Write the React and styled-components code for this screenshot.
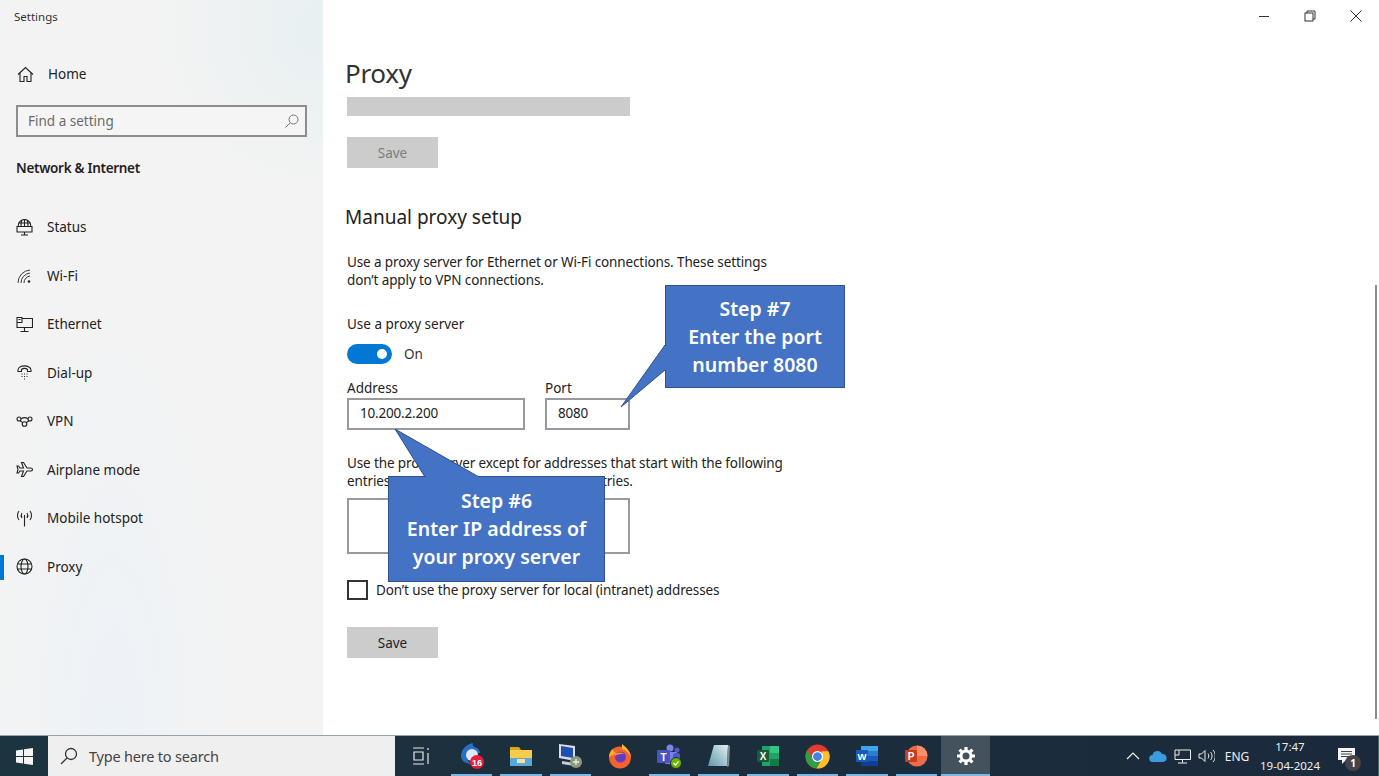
import React from 'react'
import styled, { createGlobalStyle } from 'styled-components'

const Global = createGlobalStyle`
  html, body { margin: 0; padding: 0; background: #fff; overflow: hidden; }
  body { font-family: "Noto Sans", "Open Sans", "Liberation Sans", sans-serif; color: #1a1a1a; }
  * { box-sizing: border-box; }
`
const Screen = styled.div`
  width: 1379px;
  height: 776px;
  display: flex;
  flex-direction: column;
  overflow: hidden;
`
const Win = styled.div`
  flex: 1;
  display: flex;
  min-height: 0;
`
const Sidebar = styled.aside`
  width: 323px;
  flex: none;
  background:
    radial-gradient(circle at 100% 4%, #e8f0f2 0, rgba(232,240,242,0) 22%),
    radial-gradient(ellipse at 35% 100%, #edf2f7 0, rgba(237,242,247,0) 42%),
    #f3f3f3;
`
const AppTitle = styled.div`
  font-size: 11.5px;
  line-height: 16px;
  padding: 9px 0 0 14px;
  height: 58px;
  color: #333;
`
const HomeRow = styled.div`
  display: flex;
  align-items: center;
  height: 32px;
  padding-left: 17px;
  gap: 14px;
  font-size: 13.5px;
  color: #222;
`
const SearchBox = styled.div`
  margin: 15px 16px 0;
  height: 32px;
  width: 291px;
  border: 2px solid #8d8d8d;
  background: #f5f5f5;
  display: flex;
  align-items: center;
  justify-content: space-between;
  padding: 0 5px 0 10px;
  font-size: 13.5px;
  color: #6b6b6b;
`
const GroupTitle = styled.div`
  font-size: 13.5px;
  font-weight: 600;
  line-height: 20px;
  padding: 21px 0 0 16px;
  height: 66px;
  color: #1f1f1f;
  letter-spacing: -0.3px;
`
const Nav = styled.nav`
  display: flex;
  flex-direction: column;
`
const NavRow = styled.div`
  height: 48.5px;
  display: flex;
  align-items: center;
  gap: 14px;
  padding-left: 16px;
  font-size: 13.5px;
  color: #222;
  position: relative;
  &::before {
    content: '';
    display: ${p => (p.$active ? 'block' : 'none')};
    position: absolute;
    left: 0;
    top: 12px;
    width: 4px;
    height: 25px;
    background: #0078d4;
  }
`
const IconBox = styled.span`
  width: 17px;
  height: 17px;
  display: flex;
  flex: none;
`
const Main = styled.main`
  flex: 1;
  position: relative;
  background: #fff;
  min-width: 0;
`
const WindowControls = styled.div`
  height: 32px;
  display: flex;
  justify-content: flex-end;
  align-items: flex-start;
`
const WinBtn = styled.div`
  width: 46px;
  height: 32px;
  display: flex;
  align-items: center;
  justify-content: center;
`
const Content = styled.div`
  padding: 21px 0 0 24px;
`
const PageTitle = styled.h1`
  margin: 0 0 4px -2px;
  font-size: 26px;
  font-weight: 400;
  line-height: 40px;
  color: #333;
  letter-spacing: -0.3px;
`
const HiddenField = styled.div`
  width: 283px;
  height: 19px;
  background: #ccc;
  margin-bottom: 21px;
`
const SaveButton = styled.div`
  width: 91px;
  height: 31px;
  background: #ccc;
  display: flex;
  align-items: center;
  justify-content: center;
  font-size: 13.5px;
  color: ${p => (p.$off ? '#7c7c7c' : '#222')};
  margin-top: ${p => p.$top || 0}px;
`
const SectionTitle = styled.h2`
  margin: 35px 0 22px -2px;
  font-size: 19px;
  font-weight: 400;
  line-height: 28px;
  color: #222;
`
const Para = styled.p`
  margin: ${p => p.$top || 0}px 0 0;
  width: 470px;
  font-size: 13.5px;
  line-height: 18px;
  color: #222;
  letter-spacing: -0.12px;
`
const Label = styled.div`
  font-size: 13.5px;
  line-height: ${p => p.$line || 20}px;
  color: #222;
  margin-top: ${p => p.$top || 0}px;
`
const ToggleRow = styled.div`
  display: flex;
  align-items: center;
  gap: 12px;
  height: 20px;
  margin-top: 10px;
  font-size: 13.5px;
  color: #333;
`
const Toggle = styled.div`
  width: 45px;
  height: 20px;
  border-radius: 10px;
  background: #0078d4;
  display: flex;
  align-items: center;
  justify-content: flex-end;
  padding-right: 5px;
  &::after {
    content: '';
    width: 10px;
    height: 10px;
    border-radius: 50%;
    background: #fff;
  }
`
const Fields = styled.div`
  display: flex;
  gap: 20px;
  margin-top: 15px;
`
const Field = styled.div`
  display: flex;
  flex-direction: column;
`
const Input = styled.div`
  width: ${p => p.$w}px;
  height: ${p => p.$h || 32}px;
  margin-top: ${p => p.$top || 0}px;
  border: 2px solid #9a9a9a;
  background: #fff;
  font-size: 13.5px;
  line-height: 26px;
  padding-left: 11px;
  color: #222;
  letter-spacing: -0.2px;
`
const CheckRow = styled.div`
  display: flex;
  align-items: center;
  gap: 8px;
  margin-top: 26px;
  font-size: 13.5px;
  color: #222;
  letter-spacing: -0.12px;
`
const CheckBox = styled.div`
  width: 21px;
  height: 20px;
  border: 2px solid #333;
`
const Scrollbar = styled.div`
  position: absolute;
  right: 2px;
  top: 285px;
  width: 2px;
  height: 434px;
  background: #8c8c8c;
`
const Callout = styled.div`
  position: absolute;
  left: ${p => p.$x}px;
  top: ${p => p.$y}px;
  width: ${p => p.$w}px;
  height: ${p => p.$h}px;
  background: #4472c4;
  border: 1px solid #2f528f;
  display: flex;
  flex-direction: column;
  align-items: center;
  justify-content: center;
  color: #fff;
  font-size: 19.5px;
  font-weight: 600;
  line-height: 28px;
  text-align: center;
`
const Tail = styled.svg`
  position: absolute;
  left: 0;
  top: 0;
  overflow: visible;
  pointer-events: none;
`
const Taskbar = styled.footer`
  height: 41px;
  flex: none;
  display: flex;
  align-items: stretch;
  background: linear-gradient(90deg, #1c3440 0, #1c2e3c 45%, #1a2a3c 100%);
  border-top: 1px solid #9aa3aa;
  color: #f0f0f0;
`
const StartBtn = styled.div`
  width: 48px;
  display: flex;
  align-items: center;
  justify-content: center;
`
const TaskSearch = styled.div`
  width: 347px;
  background: #efefef;
  display: flex;
  align-items: center;
  gap: 11px;
  padding-left: 12px;
  font-size: 14.5px;
  letter-spacing: -0.2px;
  color: #444;
`
const TaskView = styled.div`
  width: 52px;
  display: flex;
  align-items: center;
  justify-content: center;
`
const Apps = styled.div`
  display: flex;
`
const AppBtn = styled.div`
  width: 49.4px;
  display: flex;
  align-items: center;
  justify-content: center;
  position: relative;
  background: ${p => (p.$active ? '#44525e' : 'transparent')};
  &::after {
    content: '';
    display: ${p => (p.$running ? 'block' : 'none')};
    position: absolute;
    bottom: 0;
    left: ${p => (p.$active ? 0 : 4)}px;
    right: ${p => (p.$active ? 0 : 4)}px;
    height: 2px;
    background: #7cb6e4;
  }
`
const Tray = styled.div`
  margin-left: auto;
  display: flex;
  align-items: center;
  position: relative;
  padding-right: 11px;
  border-right: 1px solid #50606c;
`
const TrayIcon = styled.div`
  width: 24.5px;
  display: flex;
  justify-content: center;
`
const Lang = styled.div`
  width: 36px;
  text-align: center;
  font-size: 12px;
  color: #eee;
`
const Clock = styled.div`
  width: 70px;
  text-align: center;
  font-size: 11.5px;
  line-height: 19px;
  color: #eee;
`
const Notify = styled.div`
  width: 42px;
  height: 40px;
  position: relative;
  display: flex;
  align-items: center;
  justify-content: center;
`
const Badge = styled.div`
  position: absolute;
  left: 20px;
  top: 19px;
  width: 16px;
  height: 16px;
  border-radius: 50%;
  background: #444;
  color: #fff;
  font-size: 10px;
  font-weight: 700;
  line-height: 16px;
  text-align: center;
`

const Line = ({ children, size = 17, w = 1.1, color = '#222' }) => (
  <svg width={size} height={size} viewBox="0 0 17 17" fill="none" stroke={color} strokeWidth={w}>{children}</svg>
)

const navItems = [
  ['Status', <Line key="a"><path d="M2.5 8C1.5 3.5 5 .5 8.5.5S15.5 3.5 14.5 8" /><path d="M2.5 4h12M6 1c-1 2-1.200 4-1 7M11 1c1 2 1.200 4 1 7M8.5.5V8" /><path d="M1 7.5h15V13H1zM8.5 13v2.500M5 16h7" /></Line>],
  ['Wi-Fi', <Line key="b" w={0.9}><path d="M2 16A13 13 0 0 1 14 3M5 16A10 10 0 0 1 14 6M8 16A7 7 0 0 1 14 9" /><circle cx="13" cy="14.5" r="1.300" fill="#222" stroke="none" /></Line>],
  ['Ethernet', <Line key="c"><path d="M6 2.5h10.500v9H1V7" /><path d="M1 1.5h5v5H1zM2.5 3.5h2M8.5 11.500V15M4.500 15.500h8" /></Line>],
  ['Dial-up', <Line key="d"><path d="M2 6C2 .5 15 .5 15 6v1.500h-3.500v-2C10 4 7 4 5.500 5.500v2H2z" /><path d="M5.500 10h1M8 10h1M10.500 10h1M5.500 12.500h1M8 12.500h1M10.500 12.500h1M8 15h1" /></Line>],
  ['VPN', <Line key="e"><circle cx="3" cy="6" r="2" /><circle cx="14" cy="6" r="2" /><circle cx="8.5" cy="11" r="2.300" /><path d="M5 6c2-1.500 5-1.500 7 0M4.200 7.800l2.500 1.800M12.800 7.800l-2.500 1.800" /></Line>],
  ['Airplane mode', <Line key="f"><path d="M16.500 8.500c0-1-1-1.500-2-1.500H11L7.500 1.500h-2l2 5.500H4L2.500 5H1l1 3.500L1 12h1.500L4 10h3.500l-2 5.500h2L11 10h3.500c1 0 2-.5 2-1.500z" /></Line>],
  ['Mobile hotspot', <Line key="g"><path d="M8.5 5v11.500" /><path d="M6 3c-1 1.500-1 3.500 0 5M11 3c1 1.500 1 3.500 0 5M3 1C1 3.500 1 7.500 3 10M14 1c2 2.500 2 6.500 0 9" /></Line>],
  ['Proxy', <Line key="h"><circle cx="8.5" cy="8.5" r="7.500" /><ellipse cx="8.5" cy="8.5" rx="3.500" ry="7.500" /><path d="M1.5 6h14M1.5 11h14" /></Line>],
]

const Outlook = () => (
  <svg width="26" height="28" viewBox="0 0 26 28">
    <path d="M2 14C2 7 8 2 14 1c-1 3 1 4 4 5 2 1 3 3 3 5H8c-1 5 1 9 5 11-6 0-11-3-11-8z" fill="#2a6fc4" />
    <circle cx="13" cy="13" r="6" fill="#dfe9f5" />
    <circle cx="18" cy="20" r="7" fill="#e81c3c" />
    <text x="18" y="23.5" fontSize="9" fontWeight="700" fill="#fff" textAnchor="middle" fontFamily="Liberation Sans">16</text>
  </svg>
)
const Folder = () => (
  <svg width="24" height="22" viewBox="0 0 24 22">
    <path d="M1 2h9l2 3h11v3H1z" fill="#d9a520" />
    <rect x="1" y="5" width="22" height="16" fill="#f7cc4a" />
    <rect x="1" y="13" width="22" height="8" fill="#58a8dc" />
    <rect x="8" y="14" width="8" height="4" fill="#f7e29a" />
  </svg>
)
const NetPc = () => (
  <svg width="26" height="26" viewBox="0 0 26 26">
    <path d="M2 1l16 2v15L2 15z" fill="#d8dde6" />
    <path d="M4 3l12 2v10L4 13z" fill="#1f4fb0" />
    <path d="M5 18l12 2v3L5 21z" fill="#c9ccd2" />
    <circle cx="19" cy="19" r="6" fill="#8b9a7f" />
    <path d="M16 19h6M19 16v6" stroke="#e8f0e0" strokeWidth="1.3" />
  </svg>
)
const Firefox = () => (
  <svg width="24" height="26" viewBox="0 0 24 26">
    <circle cx="12" cy="14.5" r="11" fill="#f4642a" />
    <path d="M14 1c4 3 8 7 9 13-2-4-5-7-9-8z" fill="#ffb32c" />
    <path d="M1 14c0-4 2-7 4-8 0 3 2 4 4 4z" fill="#ffa92c" />
    <circle cx="12.5" cy="14" r="5.5" fill="#6a39c4" />
    <path d="M7 11c3-2 7-2 9 0-2 0-6 0-9 2z" fill="#f98a2e" />
  </svg>
)
const Teams = () => (
  <svg width="26" height="26" viewBox="0 0 26 26">
    <circle cx="14" cy="5" r="3.5" fill="#7b83eb" />
    <circle cx="21" cy="7" r="2.5" fill="#5059c9" />
    <rect x="9" y="9" width="12" height="12" rx="1" fill="#7b83eb" />
    <rect x="17" y="10" width="7" height="9" rx="2" fill="#5059c9" />
    <rect x="1" y="7" width="13" height="13" rx="1" fill="#4b53bc" />
    <text x="7.5" y="17.5" fontSize="10" fontWeight="700" fill="#fff" textAnchor="middle" fontFamily="Liberation Sans">T</text>
    <circle cx="20" cy="20" r="5.5" fill="#6bb700" stroke="#1c2e3c" />
    <path d="M17.5 20l2 2 3-3.500" stroke="#fff" fill="none" strokeWidth="1.2" />
  </svg>
)
const Notepad = () => (
  <svg width="24" height="24" viewBox="0 0 24 24">
    <defs>
      <linearGradient id="pad" x1="0" y1="1" x2="1" y2="0">
        <stop offset="0" stopColor="#5f97a8" />
        <stop offset="1" stopColor="#e2f1f4" />
      </linearGradient>
    </defs>
    <path d="M7 1h14l-1 21H1z" fill="url(#pad)" />
    <path d="M21 1l2 1-1 20-2 1z" fill="#7e8d94" />
  </svg>
)
const Excel = () => (
  <svg width="24" height="24" viewBox="0 0 24 24">
    <rect x="6" y="2" width="17" height="20" fill="#21a366" />
    <rect x="14" y="2" width="9" height="7" fill="#33c481" />
    <rect x="14" y="15" width="9" height="7" fill="#107c41" />
    <rect x="1" y="6" width="12" height="12" rx="1" fill="#185c37" />
    <text x="7" y="15.5" fontSize="10" fontWeight="700" fill="#fff" textAnchor="middle" fontFamily="Liberation Sans">X</text>
  </svg>
)
const Chrome = () => (
  <svg width="25" height="25" viewBox="0 0 24 24">
    <circle cx="12" cy="12" r="11.5" fill="#e33b2e" />
    <path d="M22.5 7A11.5 11.5 0 0 1 11 23.500l5-9V7z" fill="#fbc02d" />
    <path d="M2.5 5.5A11.5 11.5 0 0 0 11 23.500l5-9H7z" fill="#2f9e44" />
    <circle cx="12" cy="12" r="5.3" fill="#fff" />
    <circle cx="12" cy="12" r="4.2" fill="#3f83ea" />
  </svg>
)
const Word = () => (
  <svg width="24" height="24" viewBox="0 0 24 24">
    <rect x="6" y="2" width="17" height="20" fill="#2b7cd3" />
    <rect x="6" y="2" width="17" height="5" fill="#41a5ee" />
    <rect x="6" y="12" width="17" height="5" fill="#185abd" />
    <rect x="6" y="17" width="17" height="5" fill="#103f91" />
    <rect x="1" y="6" width="12" height="12" rx="1" fill="#185abd" />
    <text x="7" y="15.5" fontSize="9.5" fontWeight="700" fill="#fff" textAnchor="middle" fontFamily="Liberation Sans">W</text>
  </svg>
)
const Ppt = () => (
  <svg width="24" height="24" viewBox="0 0 24 24">
    <circle cx="13" cy="12" r="10.5" fill="#ed6c47" />
    <path d="M13 1.5A10.5 10.5 0 0 1 23.500 12H13z" fill="#ff8f6b" />
    <rect x="1" y="6" width="12" height="12" rx="1" fill="#c43e1c" />
    <text x="7" y="15.5" fontSize="10" fontWeight="700" fill="#fff" textAnchor="middle" fontFamily="Liberation Sans">P</text>
  </svg>
)
const Gear = () => (
  <svg width="20" height="20" viewBox="0 0 20 20" fill="none" stroke="#fff">
    <circle cx="10" cy="10" r="5" strokeWidth="3" />
    <path d="M10 1v3.500M10 15.500V19M1 10h3.500M15.500 10H19M3.600 3.600l2.500 2.500M13.900 13.900l2.500 2.500M3.600 16.400l2.500-2.500M13.900 6.100l2.500-2.500" strokeWidth="3.2" />
  </svg>
)

const apps = [
  { icon: <Outlook />, running: true },
  { icon: <Folder />, running: true },
  { icon: <NetPc />, running: true },
  { icon: <Firefox /> },
  { icon: <Teams />, running: true },
  { icon: <Notepad />, running: true },
  { icon: <Excel />, running: true },
  { icon: <Chrome />, running: true },
  { icon: <Word />, running: true },
  { icon: <Ppt />, running: true },
  { icon: <Gear />, running: true, active: true },
]

const App = () => (
  <Screen>
    <Global />
    <Win>
      <Sidebar>
        <AppTitle>Settings</AppTitle>
        <HomeRow>
          <Line><path d="M1 8.5l7.500-7 7.500 7M3 7v8.500h4v-5h3v5h4V7" /></Line>
          Home
        </HomeRow>
        <SearchBox>
          Find a setting
          <svg width="16" height="16" viewBox="0 0 16 16" fill="none" stroke="#777" strokeWidth="1"><circle cx="9.5" cy="6.5" r="4.5" /><path d="M6 10l-4.500 4.500" /></svg>
        </SearchBox>
        <GroupTitle>Network &amp; Internet</GroupTitle>
        <Nav>
          {navItems.map(([label, icon]) => (
            <NavRow key={label} $active={label === 'Proxy'}>
              <IconBox>{icon}</IconBox>
              {label}
            </NavRow>
          ))}
        </Nav>
      </Sidebar>
      <Main>
        <WindowControls>
          <WinBtn><svg width="12" height="12" viewBox="0 0 12 12" stroke="#333"><path d="M1 6.5h10" /></svg></WinBtn>
          <WinBtn><svg width="12" height="12" viewBox="0 0 12 12" fill="none" stroke="#333"><rect x="1" y="3" width="8" height="8" /><path d="M3 3V1h8v8H9" /></svg></WinBtn>
          <WinBtn><svg width="14" height="14" viewBox="0 0 14 14" stroke="#333"><path d="M1.5 1.5l11 11M12.5 1.500l-11 11" /></svg></WinBtn>
        </WindowControls>
        <Content>
          <PageTitle>Proxy</PageTitle>
          <HiddenField />
          <SaveButton $off>Save</SaveButton>
          <SectionTitle>Manual proxy setup</SectionTitle>
          <Para>Use a proxy server for Ethernet or Wi-Fi connections. These settings<br />don’t apply to VPN connections.</Para>
          <Label $top={25}>Use a proxy server</Label>
          <ToggleRow><Toggle />On</ToggleRow>
          <Fields>
            <Field>
              <Label $line={19}>Address</Label>
              <Input $w={178}>10.200.2.200</Input>
            </Field>
            <Field>
              <Label $line={19}>Port</Label>
              <Input $w={85}>8080</Input>
            </Field>
          </Fields>
          <Para $top={24}>Use the proxy server except for addresses that start with the following<br />entries. Use semicolons (;) to separate entries.</Para>
          <Input $w={283} $h={56} $top={8} />
          <CheckRow><CheckBox />Don’t use the proxy server for local (intranet) addresses</CheckRow>
          <SaveButton $top={27}>Save</SaveButton>
        </Content>
        <Scrollbar />
        <Tail width="1" height="1">
          <path d="M342 345L298 407 342 370" fill="#4472c4" stroke="#2f528f" />
          <path d="M72 429L102 477H156z" fill="#4472c4" stroke="#2f528f" />
        </Tail>
        <Callout $x={342} $y={285} $w={180} $h={103}>
          <span>Step #7</span><span>Enter the port</span><span>number 8080</span>
        </Callout>
        <Callout $x={65} $y={476} $w={217} $h={106}>
          <span>Step #6</span><span>Enter IP address of</span><span>your proxy server</span>
        </Callout>
        <Tail width="1" height="1">
          <path d="M342.5 346v24M103 476.5h52" stroke="#4472c4" strokeWidth="2" />
        </Tail>
      </Main>
    </Win>
    <Taskbar>
      <StartBtn>
        <svg width="17" height="17" viewBox="0 0 17 17" fill="#f4f4f4"><path d="M0 2.5l7-1V8H0zM8 1.300L17 0v8H8zM0 9h7v6.500l-7-1zM8 9h9v8l-9-1.300z" /></svg>
      </StartBtn>
      <TaskSearch>
        <svg width="18" height="18" viewBox="0 0 18 18" fill="none" stroke="#333" strokeWidth="1.3"><circle cx="11" cy="7" r="5.5" /><path d="M7 11l-6 6" /></svg>
        Type here to search
      </TaskSearch>
      <TaskView>
        <svg width="18" height="18" viewBox="0 0 18 18" fill="none" stroke="#e8e8e8" strokeWidth="1.2"><path d="M1 1h11M1 17h11M2 5h9v8H2zM16 1v2M16 6v11" /></svg>
      </TaskView>
      <Apps>
        {apps.map((a, i) => (
          <AppBtn key={i} $running={a.running} $active={a.active}>{a.icon}</AppBtn>
        ))}
      </Apps>
      <Tray>
        <TrayIcon><svg width="14" height="10" viewBox="0 0 14 10" fill="none" stroke="#eee" strokeWidth="1.2"><path d="M1 8l6-6 6 6" /></svg></TrayIcon>
        <TrayIcon><svg width="18" height="12" viewBox="0 0 18 12" fill="#3a9be0"><path d="M4 12a3.500 3.500 0 0 1-.5-7A5 5 0 0 1 13 4a4 4 0 0 1 1 8z" /></svg></TrayIcon>
        <TrayIcon><svg width="17" height="15" viewBox="0 0 17 15" fill="none" stroke="#eee"><path d="M5 1h11.500v9.500H1V6M1 1h4v5H1zM8.5 10.500v3M4 14h9" /></svg></TrayIcon>
        <TrayIcon><svg width="17" height="14" viewBox="0 0 17 14" fill="none" stroke="#eee"><path d="M1 5h2.500L7 1.500v11L3.500 9H1zM10 4.500c1 1.500 1 3.500 0 5M12.500 3c2 2 2 6 0 8M15 1c3 3 3 9 0 12" /></svg></TrayIcon>
        <Lang>ENG</Lang>
        <Clock>17:47<br />19-04-2024</Clock>
        <Notify>
          <svg width="17" height="16" viewBox="0 0 17 16" fill="#f4f4f4"><path d="M0 0h17v12H8l-4 4v-4H0z" /><path d="M3 3.500h11M3 6h11M3 8.500h8" stroke="#444" /></svg>
          <Badge>1</Badge>
        </Notify>
      </Tray>
    </Taskbar>
  </Screen>
)

export default App
